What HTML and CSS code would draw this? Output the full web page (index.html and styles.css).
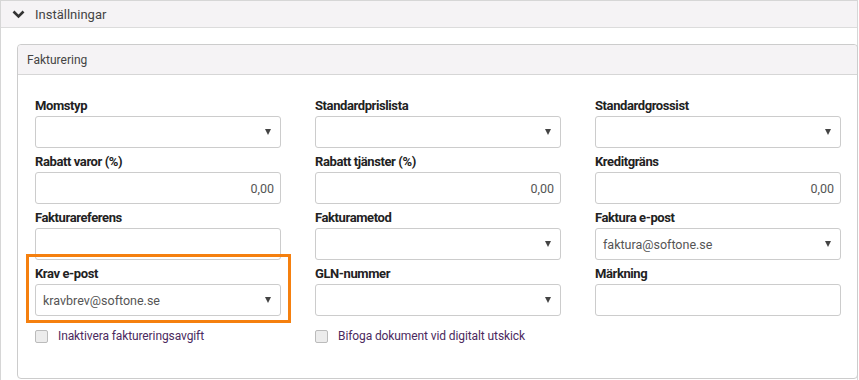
FILE: index.html
```html
<!DOCTYPE html>
<html>
<head>
    <title>Inställningar</title>
    <meta name="viewport" content="width=device-width, initial-scale=1.0">
    <link rel="stylesheet" href="styles.css">
</head>
<body>
    <div class="panel">
        <div class="panel-heading">
            <svg class="chevron" width="13" height="9" viewBox="0 0 13 9"><path d="M1.5 1.5 L6.5 6.5 L11.5 1.5" fill="none" stroke="#333" stroke-width="2.6"/></svg>
            <span>Inställningar</span>
        </div>
        <div class="panel-body">
            <div class="box">
                <div class="box-heading">Fakturering</div>
                <div class="box-body">
                    <div class="form-grid">
                        <div class="field">
                            <label>Momstyp</label>
                            <div class="input select"><span></span><i class="caret"></i></div>
                        </div>
                        <div class="field">
                            <label>Standardprislista</label>
                            <div class="input select"><span></span><i class="caret"></i></div>
                        </div>
                        <div class="field">
                            <label>Standardgrossist</label>
                            <div class="input select"><span></span><i class="caret"></i></div>
                        </div>

                        <div class="field">
                            <label>Rabatt varor (%)</label>
                            <div class="input number">0,00</div>
                        </div>
                        <div class="field">
                            <label>Rabatt tjänster (%)</label>
                            <div class="input number">0,00</div>
                        </div>
                        <div class="field">
                            <label>Kreditgräns</label>
                            <div class="input number">0,00</div>
                        </div>

                        <div class="field">
                            <label>Fakturareferens</label>
                            <div class="input"></div>
                        </div>
                        <div class="field">
                            <label>Fakturametod</label>
                            <div class="input select"><span></span><i class="caret"></i></div>
                        </div>
                        <div class="field">
                            <label>Faktura e-post</label>
                            <div class="input select"><span>faktura@softone.se</span><i class="caret"></i></div>
                        </div>

                        <div class="field highlighted">
                            <label>Krav e-post</label>
                            <div class="input select"><span>kravbrev@softone.se</span><i class="caret"></i></div>
                        </div>
                        <div class="field">
                            <label>GLN-nummer</label>
                            <div class="input select"><span></span><i class="caret"></i></div>
                        </div>
                        <div class="field">
                            <label>Märkning</label>
                            <div class="input"></div>
                        </div>

                        <div class="check"><i class="checkbox"></i>Inaktivera faktureringsavgift</div>
                        <div class="check"><i class="checkbox"></i>Bifoga dokument vid digitalt utskick</div>
                    </div>
                </div>
            </div>
        </div>
    </div>
</body>
</html>
```

FILE: styles.css
```css
body {
    margin: 0;
    font-family: Roboto, "Liberation Sans", sans-serif;
    font-size: 12px;
    color: #333;
    background: #fff;
}

.panel {
    width: 858px;
    height: 380px;
    border: 1px solid #d6d6d6;
    border-bottom: none;
    box-sizing: border-box;
}

.panel-heading {
    height: 26px;
    background: #f5f3f5;
    border-bottom: 1px solid #dcdcdc;
    display: flex;
    align-items: center;
    padding-left: 11px;
    color: #444;
    font-size: 13px;
}

.chevron {
    margin-right: 10px;
    margin-top: 1px;
}

.panel-body {
    padding: 16px 0 0 16px;
}

.box {
    width: 841px;
    height: 335px;
    border: 1px solid #ccc;
    border-radius: 4px;
    box-sizing: border-box;
}

.box-heading {
    height: 29px;
    line-height: 30px;
    background: #f5f3f5;
    border-bottom: 1px solid #d6d6d6;
    border-radius: 4px 4px 0 0;
    padding-left: 9px;
    color: #444;
}

.box-body {
    padding: 23px 0 0 17px;
}

.form-grid {
    display: grid;
    grid-template-columns: 246px 246px 246px;
    column-gap: 34px;
    row-gap: 6px;
}

.field {
    position: relative;
}

.field label {
    display: block;
    font-weight: 700;
    font-size: 13px;
    letter-spacing: -0.4px;
    line-height: 16px;
    margin-bottom: 2px;
    color: #222;
}

.input {
    height: 32px;
    border: 1px solid #ccc;
    border-radius: 3px;
    box-sizing: border-box;
    display: flex;
    align-items: center;
    padding: 0 7px;
    color: #555;
    font-size: 12.5px;
}

.input.number {
    justify-content: flex-end;
    padding-right: 6px;
}

.input.select span {
    flex: 1;
}

.caret {
    width: 0;
    height: 0;
    border-left: 3.5px solid transparent;
    border-right: 3.5px solid transparent;
    border-top: 6px solid #444;
    margin-right: 2px;
}

/* orange marker round the Krav e-post field */
.highlighted::after {
    content: "";
    position: absolute;
    left: -9px;
    right: -10px;
    top: -12px;
    bottom: -7px;
    border: 3px solid #f5800f;
}

.check {
    display: flex;
    align-items: center;
    margin-top: 6px;
    line-height: 16px;
    color: #4b2a5e;
    letter-spacing: -0.1px;
}

.checkbox {
    width: 11px;
    height: 11px;
    border: 1px solid #bbb;
    border-radius: 2px;
    background: #ececec;
    margin-right: 10px;
}
```
